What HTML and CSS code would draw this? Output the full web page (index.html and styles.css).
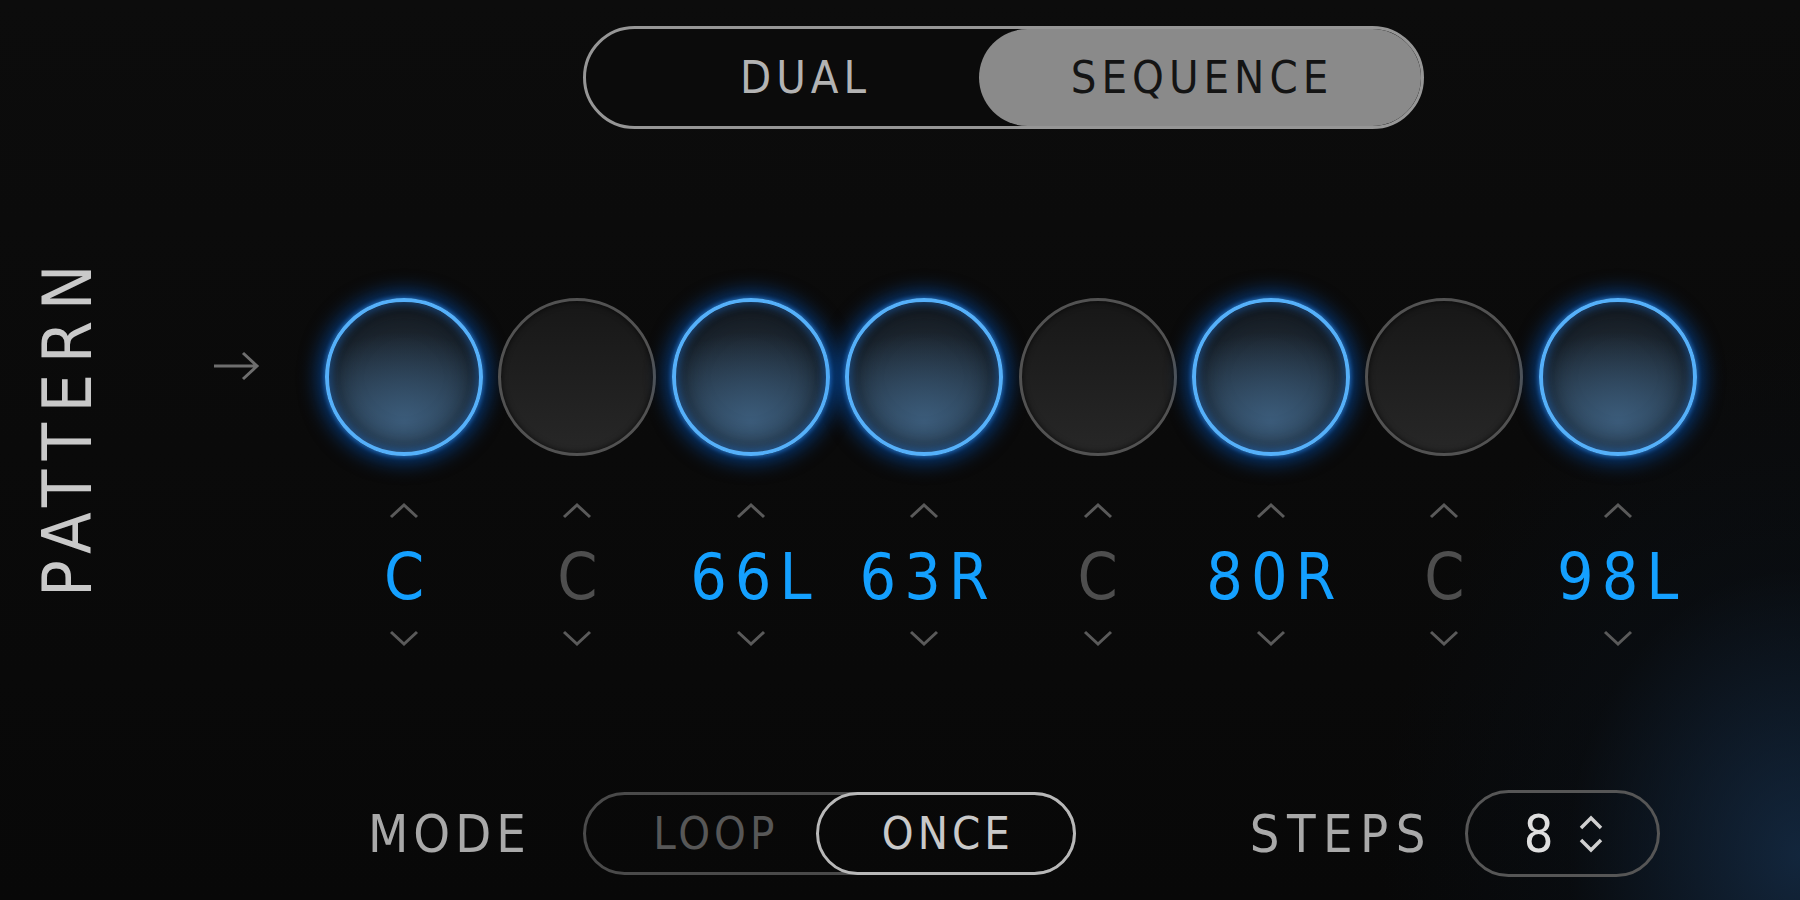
FILE: index.html
```html
<!DOCTYPE html>
<html lang="en">
<head>
  <meta charset="UTF-8">
  <title>Pattern Sequencer</title>
  <link rel="stylesheet" href="styles.css">
</head>
<body>

  <div class="app">

    <div class="top">
      <div class="switch">
        <div class="switch-opt">DUAL</div>
        <div class="switch-opt active">SEQUENCE</div>
      </div>
    </div>

    <div class="pattern">
      <div class="side-label">PATTERN</div>
      <svg class="start-arrow" width="48" height="36" viewBox="0 0 48 36">
        <path d="M2 18 H45 M31 5 L45 18 L31 31" fill="none" stroke="#6e6e6e" stroke-width="3"/>
      </svg>

      <div class="steps">
        <div class="step on">
          <div class="pad"></div>
          <svg class="chev" width="34" height="20" viewBox="0 0 34 20"><path d="M4 17 L17 5 L30 17" /></svg>
          <div class="val">C</div>
          <svg class="chev" width="34" height="20" viewBox="0 0 34 20"><path d="M4 3 L17 15 L30 3" /></svg>
        </div>
        <div class="step">
          <div class="pad"></div>
          <svg class="chev" width="34" height="20" viewBox="0 0 34 20"><path d="M4 17 L17 5 L30 17" /></svg>
          <div class="val">C</div>
          <svg class="chev" width="34" height="20" viewBox="0 0 34 20"><path d="M4 3 L17 15 L30 3" /></svg>
        </div>
        <div class="step on">
          <div class="pad"></div>
          <svg class="chev" width="34" height="20" viewBox="0 0 34 20"><path d="M4 17 L17 5 L30 17" /></svg>
          <div class="val">66L</div>
          <svg class="chev" width="34" height="20" viewBox="0 0 34 20"><path d="M4 3 L17 15 L30 3" /></svg>
        </div>
        <div class="step on">
          <div class="pad"></div>
          <svg class="chev" width="34" height="20" viewBox="0 0 34 20"><path d="M4 17 L17 5 L30 17" /></svg>
          <div class="val">63R</div>
          <svg class="chev" width="34" height="20" viewBox="0 0 34 20"><path d="M4 3 L17 15 L30 3" /></svg>
        </div>
        <div class="step">
          <div class="pad"></div>
          <svg class="chev" width="34" height="20" viewBox="0 0 34 20"><path d="M4 17 L17 5 L30 17" /></svg>
          <div class="val">C</div>
          <svg class="chev" width="34" height="20" viewBox="0 0 34 20"><path d="M4 3 L17 15 L30 3" /></svg>
        </div>
        <div class="step on">
          <div class="pad"></div>
          <svg class="chev" width="34" height="20" viewBox="0 0 34 20"><path d="M4 17 L17 5 L30 17" /></svg>
          <div class="val">80R</div>
          <svg class="chev" width="34" height="20" viewBox="0 0 34 20"><path d="M4 3 L17 15 L30 3" /></svg>
        </div>
        <div class="step">
          <div class="pad"></div>
          <svg class="chev" width="34" height="20" viewBox="0 0 34 20"><path d="M4 17 L17 5 L30 17" /></svg>
          <div class="val">C</div>
          <svg class="chev" width="34" height="20" viewBox="0 0 34 20"><path d="M4 3 L17 15 L30 3" /></svg>
        </div>
        <div class="step on">
          <div class="pad"></div>
          <svg class="chev" width="34" height="20" viewBox="0 0 34 20"><path d="M4 17 L17 5 L30 17" /></svg>
          <div class="val">98L</div>
          <svg class="chev" width="34" height="20" viewBox="0 0 34 20"><path d="M4 3 L17 15 L30 3" /></svg>
        </div>
      </div>
    </div>

    <div class="bottom">
      <span class="lbl mode-lbl">MODE</span>
      <div class="seg-switch">
        <div class="seg">LOOP</div>
        <div class="seg on">ONCE</div>
      </div>
      <span class="lbl steps-lbl">STEPS</span>
      <div class="stepper">
        <span class="stepper-val">8</span>
        <svg width="28" height="44" viewBox="0 0 28 44">
          <path d="M4 16 L14 6 L24 16 M4 28 L14 38 L24 28" fill="none" stroke="#d0d0d0" stroke-width="3.5"/>
        </svg>
      </div>
    </div>

  </div>

</body>
</html>
```

FILE: styles.css
```css
:root {
  --blue: #14a0ff;
  --ring: #55b0fa;
  --label: #a9a9a9;
}

body {
  margin: 0;
  width: 1800px;
  height: 900px;
  overflow: hidden;
  font-family: 'DejaVu Sans Condensed', 'Liberation Sans Narrow', 'DejaVu Sans', sans-serif;
  font-stretch: condensed;
  color: var(--label);
  background:
    radial-gradient(ellipse 420px 520px at 100% 95%, rgba(22, 48, 78, 0.75), rgba(10, 20, 32, 0.3) 55%, transparent 100%),
    linear-gradient(#0c0c0c, #080808);
}

.app {
  display: flex;
  flex-direction: column;
  height: 900px;
}

/* top switch */
.top {
  display: flex;
  justify-content: center;
  padding: 26px 0 0 206px;
}

.switch {
  display: flex;
  width: 841px;
  height: 103px;
  box-sizing: border-box;
  border: 3px solid #969696;
  border-radius: 52px;
  overflow: hidden;
  background: #0b0b0b;
}

.switch-opt {
  flex: 1;
  display: flex;
  align-items: center;
  justify-content: center;
  padding-left: 47px;
  font-size: 45px;
  letter-spacing: 5px;
  color: #b3b3b3;
}

.switch-opt.active {
  flex: 0 0 437px;
  padding-left: 5px;
  background: #8a8a8a;
  color: #141414;
  border-radius: 52px 0 0 52px;
}

/* pattern row */
.pattern {
  display: flex;
  align-items: flex-start;
  margin-top: 134px;
  padding-left: 34px;
}

.side-label {
  writing-mode: vertical-rl;
  transform: rotate(180deg);
  margin-top: -9px;
  font-size: 68px;
  line-height: 68px;
  letter-spacing: 10.5px;
  color: #c9c9c9;
}

.start-arrow {
  margin: 85px 0 0 110px;
}

.steps {
  display: flex;
  gap: 15.4px;
  margin: 35px 0 0 65px;
}

.step {
  display: flex;
  flex-direction: column;
  align-items: center;
  width: 158px;
}

.pad {
  width: 158px;
  height: 158px;
  box-sizing: border-box;
  border-radius: 50%;
  border: 3px solid #525252;
  background: linear-gradient(#171717, #272727);
  box-shadow: inset 0 0 6px rgba(0, 0, 0, 0.7);
}

.step.on .pad {
  border: 4px solid var(--ring);
  background:
    radial-gradient(ellipse 75% 60% at 50% 80%, rgba(62, 96, 128, 0.9), transparent 100%),
    linear-gradient(#171c22, #2b4257);
  box-shadow:
    0 0 20px 6px rgba(0, 95, 210, 0.6),
    0 0 4px 1px rgba(80, 170, 255, 0.6),
    inset 0 0 8px 2px rgba(40, 130, 240, 0.45),
    inset 0 0 22px 8px rgba(8, 14, 22, 0.55);
}

.chev {
  fill: none;
  stroke: #5a5a5a;
  stroke-width: 3;
}

.step .chev:first-of-type {
  margin-top: 44px;
}

.val {
  margin: 25px -8px 20px 0;
  font-size: 64px;
  line-height: 64px;
  letter-spacing: 8px;
  color: #4e4e4e;
}

.step.on .val {
  color: var(--blue);
}

/* bottom controls */
.bottom {
  display: flex;
  align-items: center;
  margin-top: 141px;
  padding-left: 368px;
  height: 87px;
}

.lbl {
  font-size: 52px;
  line-height: 52px;
  letter-spacing: 5px;
}

.mode-lbl {
  margin-right: 52px;
}

.seg-switch {
  display: flex;
  width: 493px;
  height: 83px;
  box-sizing: border-box;
  border: 3px solid #4a4a4a;
  border-radius: 42px;
}

.seg {
  flex: 1;
  display: flex;
  align-items: center;
  justify-content: center;
  padding-left: 30px;
  font-size: 45px;
  letter-spacing: 4px;
  color: #575757;
}

.seg.on {
  flex: 0 0 260px;
  box-sizing: border-box;
  margin: -3px -3px -3px 0;
  padding-left: 4px;
  border: 3px solid #b8b8b8;
  border-radius: 42px;
  color: #c9c9c9;
}

.steps-lbl {
  margin-left: 174px;
  margin-right: 32px;
  letter-spacing: 7.5px;
}

.stepper {
  display: flex;
  align-items: center;
  justify-content: center;
  gap: 24px;
  width: 195px;
  height: 87px;
  box-sizing: border-box;
  border: 3px solid #565656;
  border-radius: 44px;
  padding-left: 4px;
}

.stepper-val {
  font-size: 52px;
  line-height: 52px;
  color: #dedede;
}
```
